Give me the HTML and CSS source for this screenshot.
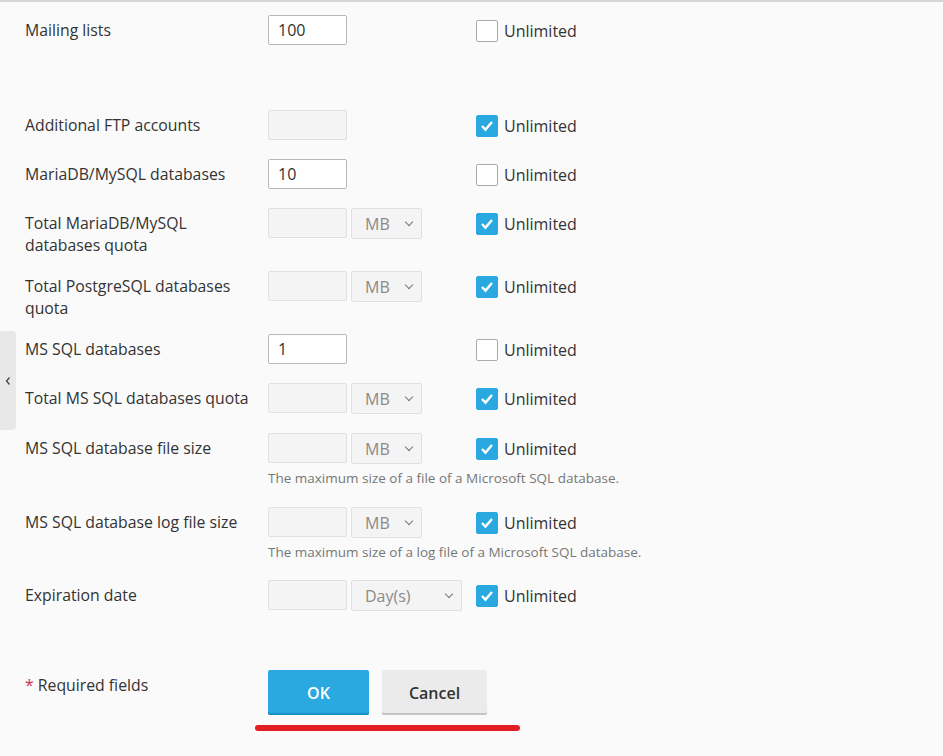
FILE: index.html
```html
<!DOCTYPE html>
<html>
<head>
<meta charset="utf-8">
<link rel="stylesheet" href="styles.css">
</head>
<body>
<div class="page">
  <div class="side-tab"><svg width="8" height="10" viewBox="0 0 8 10"><path d="M5.5 1.5 L2.5 5 L5.5 8.5" fill="none" stroke="#444" stroke-width="1.3"/></svg></div>
  <form class="form">
    <div class="row section-end">
      <div class="label">Mailing lists</div>
      <div class="field">
        <div class="controls"><input class="input" value="100"></div>
      </div>
      <label class="check"><span class="box"></span>Unlimited</label>
    </div>

    <div class="row">
      <div class="label">Additional FTP accounts</div>
      <div class="field"><div class="controls"><input class="input" disabled></div></div>
      <label class="check"><span class="box on"><svg viewBox="0 0 22 22"><path d="M5.5 11 L9.3 15 L16.5 6.5" fill="none" stroke="#fff" stroke-width="2.6"/></svg></span>Unlimited</label>
    </div>

    <div class="row">
      <div class="label">MariaDB/MySQL databases</div>
      <div class="field"><div class="controls"><input class="input" value="10"></div></div>
      <label class="check"><span class="box"></span>Unlimited</label>
    </div>

    <div class="row">
      <div class="label two">Total MariaDB/MySQL databases quota</div>
      <div class="field"><div class="controls"><input class="input" disabled><div class="select">MB<i class="chev"></i></div></div></div>
      <label class="check"><span class="box on"><svg viewBox="0 0 22 22"><path d="M5.5 11 L9.3 15 L16.5 6.5" fill="none" stroke="#fff" stroke-width="2.6"/></svg></span>Unlimited</label>
    </div>

    <div class="row">
      <div class="label two">Total PostgreSQL databases quota</div>
      <div class="field"><div class="controls"><input class="input" disabled><div class="select">MB<i class="chev"></i></div></div></div>
      <label class="check"><span class="box on"><svg viewBox="0 0 22 22"><path d="M5.5 11 L9.3 15 L16.5 6.5" fill="none" stroke="#fff" stroke-width="2.6"/></svg></span>Unlimited</label>
    </div>

    <div class="row">
      <div class="label">MS SQL databases</div>
      <div class="field"><div class="controls"><input class="input" value="1"></div></div>
      <label class="check"><span class="box"></span>Unlimited</label>
    </div>

    <div class="row">
      <div class="label">Total MS SQL databases quota</div>
      <div class="field"><div class="controls"><input class="input" disabled><div class="select">MB<i class="chev"></i></div></div></div>
      <label class="check"><span class="box on"><svg viewBox="0 0 22 22"><path d="M5.5 11 L9.3 15 L16.5 6.5" fill="none" stroke="#fff" stroke-width="2.6"/></svg></span>Unlimited</label>
    </div>

    <div class="row">
      <div class="label">MS SQL database file size</div>
      <div class="field">
        <div class="controls"><input class="input" disabled><div class="select">MB<i class="chev"></i></div></div>
        <div class="hint">The maximum size of a file of a Microsoft SQL database.</div>
      </div>
      <label class="check"><span class="box on"><svg viewBox="0 0 22 22"><path d="M5.5 11 L9.3 15 L16.5 6.5" fill="none" stroke="#fff" stroke-width="2.6"/></svg></span>Unlimited</label>
    </div>

    <div class="row tight">
      <div class="label">MS SQL database log file size</div>
      <div class="field">
        <div class="controls"><input class="input" disabled><div class="select">MB<i class="chev"></i></div></div>
        <div class="hint">The maximum size of a log file of a Microsoft SQL database.</div>
      </div>
      <label class="check"><span class="box on"><svg viewBox="0 0 22 22"><path d="M5.5 11 L9.3 15 L16.5 6.5" fill="none" stroke="#fff" stroke-width="2.6"/></svg></span>Unlimited</label>
    </div>

    <div class="row last">
      <div class="label">Expiration date</div>
      <div class="field"><div class="controls"><input class="input" disabled><div class="select wide">Day(s)<i class="chev"></i></div></div></div>
      <label class="check"><span class="box on"><svg viewBox="0 0 22 22"><path d="M5.5 11 L9.3 15 L16.5 6.5" fill="none" stroke="#fff" stroke-width="2.6"/></svg></span>Unlimited</label>
    </div>

    <div class="actions">
      <div class="label"><span class="req">*</span> Required fields</div>
      <div class="buttons-wrap">
        <div class="buttons">
          <button type="button" class="btn primary">OK</button>
          <button type="button" class="btn">Cancel</button>
        </div>
        <div class="underline"></div>
      </div>
    </div>
  </form>
</div>
</body>
</html>
```
FILE: styles.css
```css
* { box-sizing: border-box; }
html, body { margin: 0; padding: 0; }
body {
  background: #fafafa;
  font-family: "Open Sans", "Liberation Sans", sans-serif;
  font-size: 16px;
  color: #333;
  height: 756px;
  overflow: hidden;
}
.page {
  position: relative;
  border-top: 2px solid #d6d6d6;
  height: 756px;
}
.side-tab {
  position: absolute;
  left: 0;
  top: 329px;
  width: 16px;
  height: 99px;
  background: #e8e8e8;
  border-radius: 0 4px 4px 0;
  display: flex;
  align-items: center;
  justify-content: center;
}
.form {
  padding: 13px 0 0 25px;
}
.row {
  display: flex;
  align-items: flex-start;
  margin-bottom: 19px;
}
.row.section-end { margin-bottom: 65px; }
.row.tight { margin-bottom: 18px; }
.row.last { margin-bottom: 59px; }
.label {
  width: 243px;
  flex: none;
  padding-top: 4px;
  line-height: 22px;
  margin-bottom: -4px;
  padding-right: 10px;
  font-size: 15.8px;
}
.field {
  width: 208px;
  flex: none;
}
.controls {
  display: flex;
  gap: 4px;
}
.input {
  width: 79px;
  height: 30px;
  border: 1px solid #b8b8b8;
  border-radius: 2px;
  background: #fff;
  font-family: inherit;
  font-size: 16px;
  color: #333;
  padding: 0 9px;
  margin: 0;
}
.input:disabled {
  background: #f4f4f4;
  border-color: #e0e0e0;
}
.select {
  width: 71px;
  height: 31px;
  border: 1px solid #e0e0e0;
  border-radius: 2px;
  background: #f4f4f4;
  color: #8a8a8a;
  padding: 0 0 0 13px;
  line-height: 30px;
  position: relative;
  font-size: 16px;
}
.select.wide { width: 111px; }
.chev {
  position: absolute;
  right: 9px;
  top: 10px;
  width: 6px;
  height: 6px;
  border-right: 1.8px solid #777;
  border-bottom: 1.8px solid #777;
  transform: rotate(45deg);
}
.hint {
  margin-top: 4px;
  line-height: 20px;
  font-size: 13.5px;
  color: #777;
  white-space: nowrap;
}
.check {
  display: flex;
  align-items: center;
  height: 30px;
  padding-top: 2px;
  font-size: 16px;
  color: #333;
}
.box {
  width: 22px;
  height: 22px;
  border: 1px solid #aaa;
  border-radius: 2px;
  background: #fff;
  margin-right: 6px;
  display: flex;
}
.box.on {
  background: #29a9df;
  border-color: #29a9df;
}
.box svg { width: 20px; height: 20px; }
.actions {
  display: flex;
  align-items: flex-start;
}
.req { color: #d02d4b; }
.buttons-wrap {
  margin-left: -13px;
}
.buttons {
  display: flex;
  gap: 13px;
  padding-left: 13px;
}
.btn {
  height: 45px;
  border: none;
  border-radius: 2px;
  font-family: "Open Sans", "Liberation Sans", sans-serif;
  font-size: 16px;
  font-weight: 600;
  background: #ebebeb;
  color: #333;
  box-shadow: inset 0 -2px 0 #c4c4c4;
  width: 105px;
  padding: 0;
}
.btn.primary {
  width: 101px;
  background: #29a9df;
  color: #fff;
  box-shadow: inset 0 -2px 0 #1b8fc0;
}
.underline {
  margin-top: 10px;
  width: 265px;
  height: 6px;
  border-radius: 3px;
  background: #e31e24;
}
```
